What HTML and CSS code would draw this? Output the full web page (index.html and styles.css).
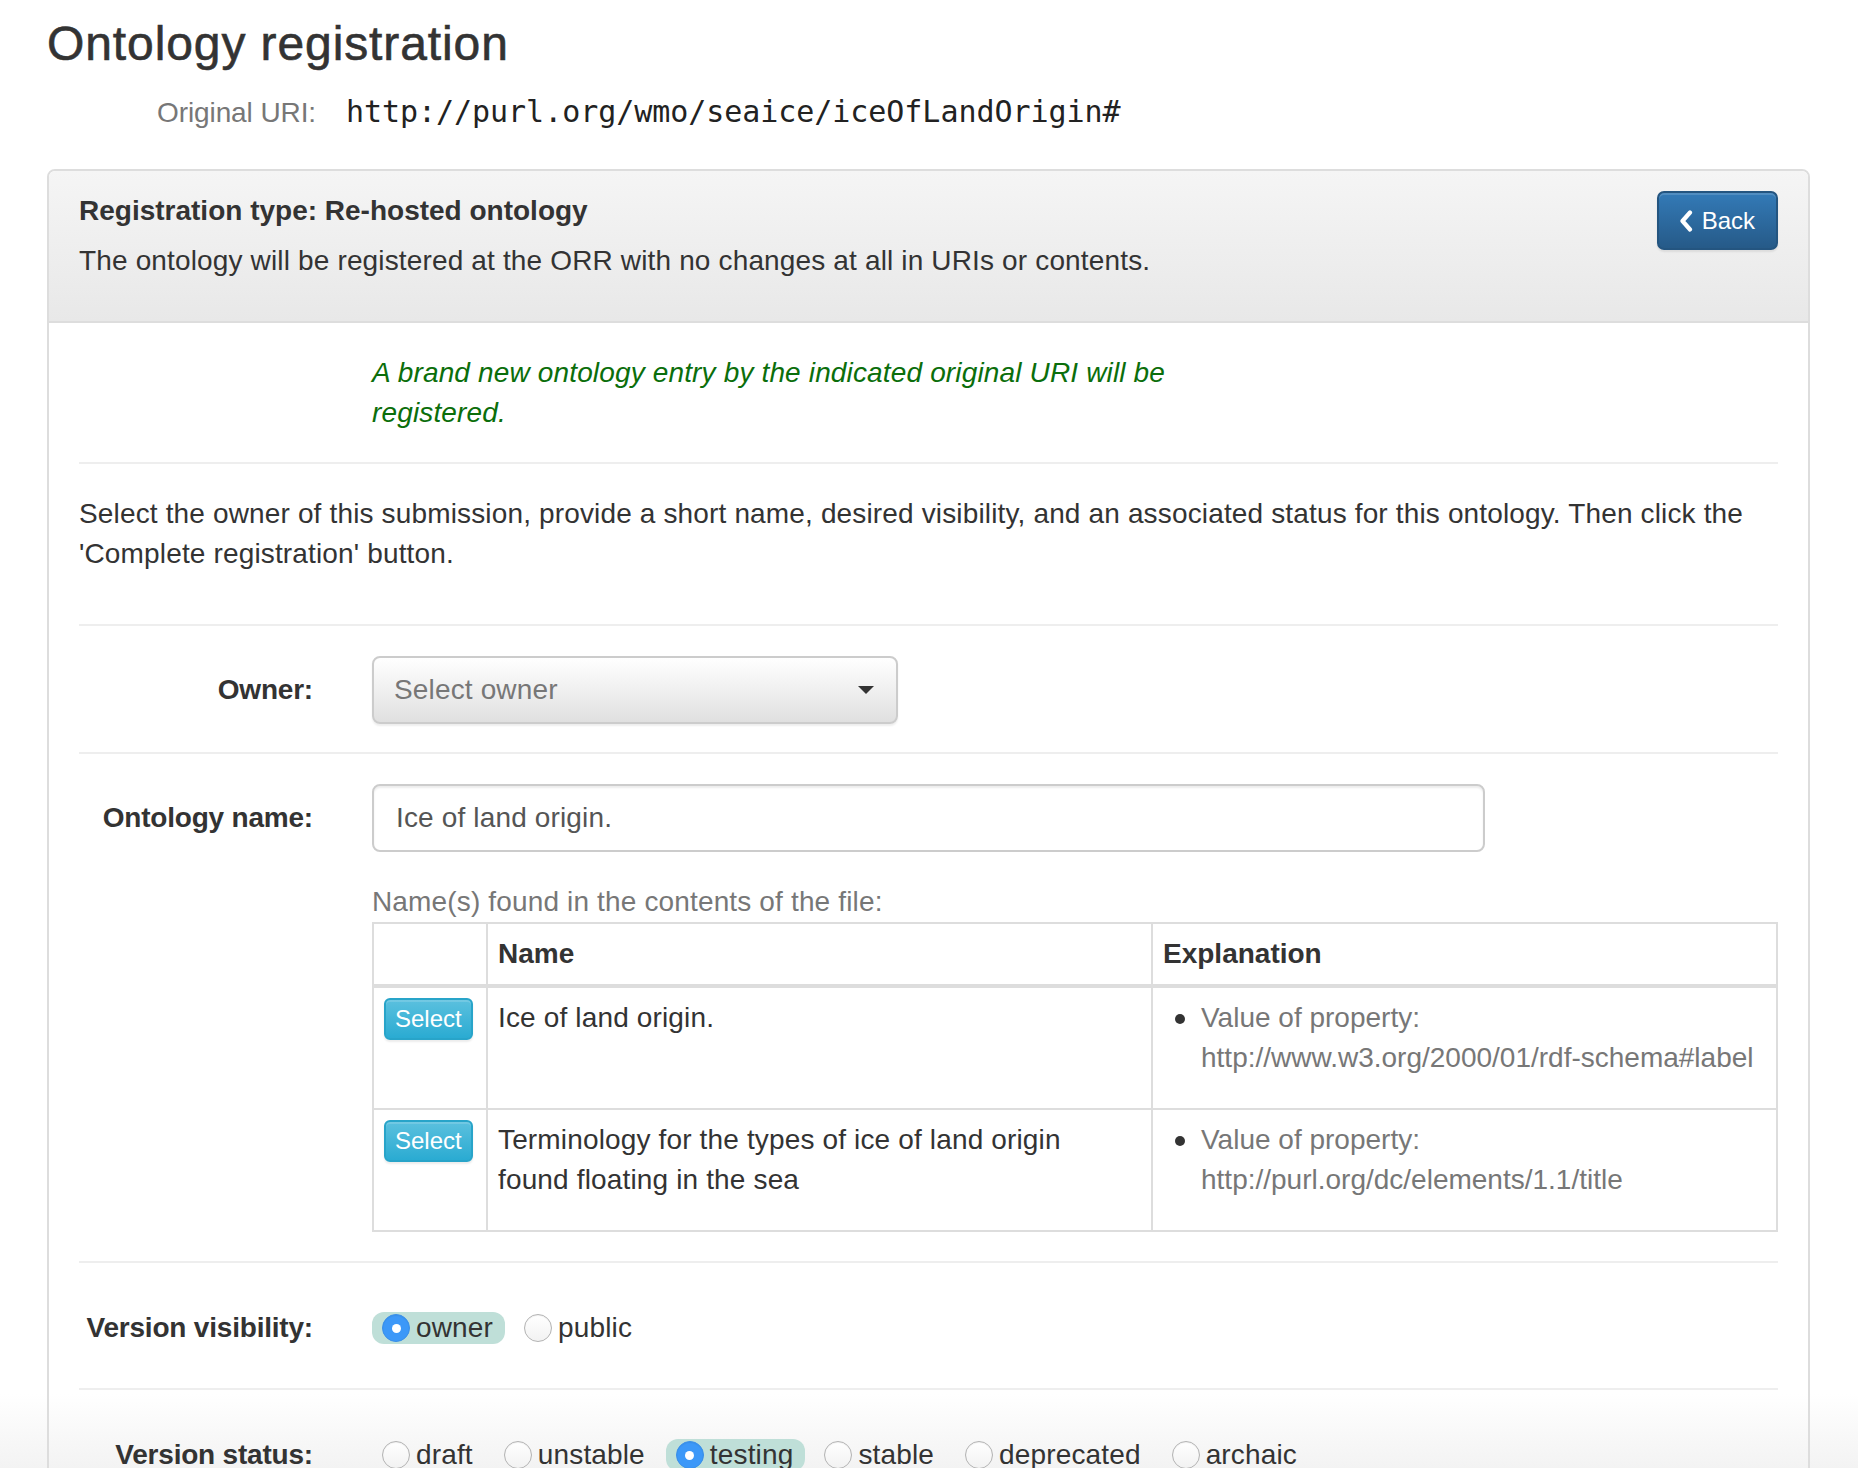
FILE: index.html
```html
<!DOCTYPE html>
<html lang="en">
<head>
<meta charset="utf-8">
<title>Ontology registration</title>
<link rel="stylesheet" href="styles.css">
</head>
<body>
<h1 class="page-title">Ontology registration</h1>
<div class="uri-row">
  <span class="uri-label">Original URI:</span>
  <span class="uri-value">http://purl.org/wmo/seaice/iceOfLandOrigin#</span>
</div>

<div class="panel">
  <div class="panel-heading">
    <div class="heading-text">
      <div class="heading-title">Registration type: Re-hosted ontology</div>
      <p class="heading-desc">The ontology will be registered at the ORR with no changes at all in URIs or contents.</p>
    </div>
    <button class="btn-back" type="button">
      <svg class="chev" width="14" height="22" viewBox="0 0 14 22"><path d="M11 2.5 L3.5 11 L11 19.5" fill="none" stroke="#fff" stroke-width="4.2" stroke-linecap="round" stroke-linejoin="round"/></svg>
      <span>Back</span>
    </button>
  </div>

  <div class="panel-body">
    <p class="new-entry">A brand new ontology entry by the indicated original URI will be registered.</p>
    <hr class="sep sep-1">
    <p class="intro">Select the owner of this submission, provide a short name, desired visibility, and an associated status for this ontology. Then click the 'Complete registration' button.</p>
    <hr class="sep sep-2">

    <div class="form-row row-owner">
      <label class="form-label">Owner:</label>
      <div class="field">
        <div class="select-btn">
          <span>Select owner</span>
          <span class="caret"></span>
        </div>
      </div>
    </div>
    <hr class="sep sep-3">

    <div class="form-row">
      <label class="form-label">Ontology name:</label>
      <div class="field field-wide">
        <div class="text-input">Ice of land origin.</div>
        <div class="names-caption">Name(s) found in the contents of the file:</div>
        <table class="names-table">
          <colgroup>
            <col class="c1">
            <col class="c2">
            <col class="c3">
          </colgroup>
          <thead>
            <tr><th></th><th>Name</th><th>Explanation</th></tr>
          </thead>
          <tbody>
            <tr>
              <td><button class="btn-select" type="button">Select</button></td>
              <td class="name-cell">Ice of land origin.</td>
              <td><ul class="expl"><li>Value of property:<br>http://www.w3.org/2000/01/rdf-schema#label</li></ul></td>
            </tr>
            <tr>
              <td><button class="btn-select" type="button">Select</button></td>
              <td class="name-cell">Terminology for the types of ice of land origin found floating in the sea</td>
              <td><ul class="expl"><li>Value of property:<br>http://purl.org/dc/elements/1.1/title</li></ul></td>
            </tr>
          </tbody>
        </table>
      </div>
    </div>
    <hr class="sep sep-4">

    <div class="form-row row-visibility">
      <label class="form-label">Version visibility:</label>
      <div class="radio-group">
        <span class="radio is-checked"><span class="radio-dot"></span>owner</span>
        <span class="radio"><span class="radio-dot"></span>public</span>
      </div>
    </div>
    <hr class="sep sep-5">

    <div class="form-row row-status">
      <label class="form-label">Version status:</label>
      <div class="radio-group">
        <span class="radio"><span class="radio-dot"></span>draft</span>
        <span class="radio"><span class="radio-dot"></span>unstable</span>
        <span class="radio is-checked"><span class="radio-dot"></span>testing</span>
        <span class="radio"><span class="radio-dot"></span>stable</span>
        <span class="radio"><span class="radio-dot"></span>deprecated</span>
        <span class="radio"><span class="radio-dot"></span>archaic</span>
      </div>
    </div>
  </div>
</div>
</body>
</html>
```
FILE: styles.css
```css
* { box-sizing: border-box; }
html {
  margin: 0;
  background: linear-gradient(to bottom, #fff 0, #fff calc(100% - 74px), #f3f3f3 100%) fixed;
}
body {
  margin: 0;
  font-family: "Liberation Sans", Arial, Helvetica, sans-serif;
  font-size: 28px;
  line-height: 40px;
  letter-spacing: 0.15px;
  color: #333;
  padding: 17px 48px 120px 47px;
}
.page-title {
  margin: 0 0 22px;
  font-size: 48px;
  line-height: 53px;
  font-weight: 400;
  letter-spacing: 0.9px;
  -webkit-text-stroke: 0.6px #333;
}
.uri-row { display: flex; align-items: baseline; }
.uri-label { width: 269px; text-align: right; color: #777; letter-spacing: -0.1px; }
.uri-value {
  margin-left: 30px;
  font-family: "DejaVu Sans Mono", "Liberation Mono", monospace;
  font-size: 30px;
  letter-spacing: -0.05px;
  color: #222;
}

.panel {
  margin-top: 36px;
  border: 2px solid #ddd;
  border-radius: 8px;
}
.panel-heading {
  display: flex;
  justify-content: space-between;
  align-items: flex-start;
  padding: 20px 30px 20px;
  background: linear-gradient(#f5f5f5, #e8e8e8);
  border-bottom: 2px solid #ddd;
  border-radius: 6px 6px 0 0;
}
.heading-title { font-weight: 700; letter-spacing: 0; }
.heading-desc { margin: 10px 0 20px; }
.btn-back {
  display: inline-flex;
  align-items: center;
  gap: 9px;
  margin-top: 0;
  height: 59px;
  padding: 0 21px 0 20px;
  font-family: inherit;
  font-size: 24px;
  color: #fff;
  background: linear-gradient(#337ab7, #265a88);
  border: 2px solid #245580;
  border-radius: 7px;
  box-shadow: inset 0 2px 0 rgba(255,255,255,.15), 0 2px 2px rgba(0,0,0,.08);
}
.chev { display: block; }

.panel-body { padding: 30px; }
.new-entry {
  margin: 0 0 0 293px;
  width: 820px;
  color: #0b6e0b;
  font-style: italic;
}
.intro { margin: 0; }
.sep { border: 0; border-top: 2px solid #eee; height: 0; margin: 0; }
.sep-1 { margin: 29px 0 30px; }
.sep-2 { margin: 50px 0 30px; }
.sep-3 { margin: 28px 0 30px; }
.sep-4 { margin: 29px 0 31px; }
.sep-5 { margin: 40px 0 31px; }

.form-row { display: flex; align-items: flex-start; }
.form-label {
  width: 234px;
  margin-right: 59px;
  text-align: right;
  font-weight: 700;
  letter-spacing: -0.2px;
  padding-top: 14px;
  flex: none;
}
.field { flex: none; }
.field-wide { flex: 1; }

.select-btn {
  width: 526px;
  height: 68px;
  display: flex;
  align-items: center;
  justify-content: space-between;
  padding: 0 22px 0 20px;
  color: #777;
  background: linear-gradient(#fff, #e0e0e0);
  border: 2px solid #ccc;
  border-radius: 8px;
  box-shadow: inset 0 2px 0 rgba(255,255,255,.15), 0 2px 2px rgba(0,0,0,.07);
}
.caret {
  width: 0; height: 0;
  border-top: 8px solid #333;
  border-left: 8px solid transparent;
  border-right: 8px solid transparent;
}

.text-input {
  width: 1113px;
  height: 68px;
  padding: 12px 22px;
  color: #555;
  background: #fff;
  border: 2px solid #ccc;
  border-radius: 8px;
  box-shadow: inset 0 2px 2px rgba(0,0,0,.075);
}
.names-caption { margin-top: 30px; color: #777; }

.names-table {
  width: 100%;
  border-collapse: collapse;
  border: 2px solid #ddd;
  table-layout: fixed;
}
.names-table col.c1 { width: 114px; }
.names-table col.c2 { width: 665px; }
.names-table th, .names-table td {
  border: 2px solid #ddd;
  padding: 10px;
  text-align: left;
  vertical-align: top;
}
.names-table td.name-cell { padding-right: 40px; }
.names-table th { border-bottom-width: 4px; font-weight: 700; letter-spacing: 0; }
.btn-select {
  display: block;
  height: 42px;
  padding: 0 9px;
  font-family: inherit;
  font-size: 24px;
  line-height: 38px;
  color: #fff;
  background: linear-gradient(#5bc0de, #2aabd2);
  border: 2px solid #28a4c9;
  border-radius: 6px;
  box-shadow: inset 0 2px 0 rgba(255,255,255,.15), 0 2px 2px rgba(0,0,0,.08);
}
.expl {
  margin: 0 0 20px;
  padding-left: 38px;
  list-style: none;
  color: #777;
  white-space: nowrap;
  letter-spacing: 0;
}
.expl li { position: relative; }
.expl li::before {
  content: "";
  position: absolute;
  left: -26px;
  top: 16px;
  width: 10px;
  height: 10px;
  border-radius: 50%;
  background: #333;
}

.radio-group {
  display: flex;
  align-items: center;
  gap: 9px;
  height: 40px;
  margin-top: 14px;
}
.radio {
  display: inline-flex;
  align-items: center;
  gap: 6px;
  height: 32px;
  padding: 0 12px 0 10px;
  border-radius: 12px;
  line-height: 32px;
}
.radio.is-checked { background: #bfdfd8; }
.radio-dot {
  position: relative;
  width: 28px;
  height: 28px;
  border-radius: 50%;
  border: 1.5px solid #b3b3b3;
  background: linear-gradient(#fff, #f2f2f2);
  box-shadow: inset 0 1px 1px rgba(0,0,0,.06);
  flex: none;
}
.radio.is-checked .radio-dot {
  background: #3c98f8;
  border-color: #3a8fe8;
}
.radio.is-checked .radio-dot::after {
  content: "";
  position: absolute;
  left: 50%; top: 50%;
  width: 9px; height: 9px;
  margin: -4.5px 0 0 -4.5px;
  border-radius: 50%;
  background: #fff;
}
```
